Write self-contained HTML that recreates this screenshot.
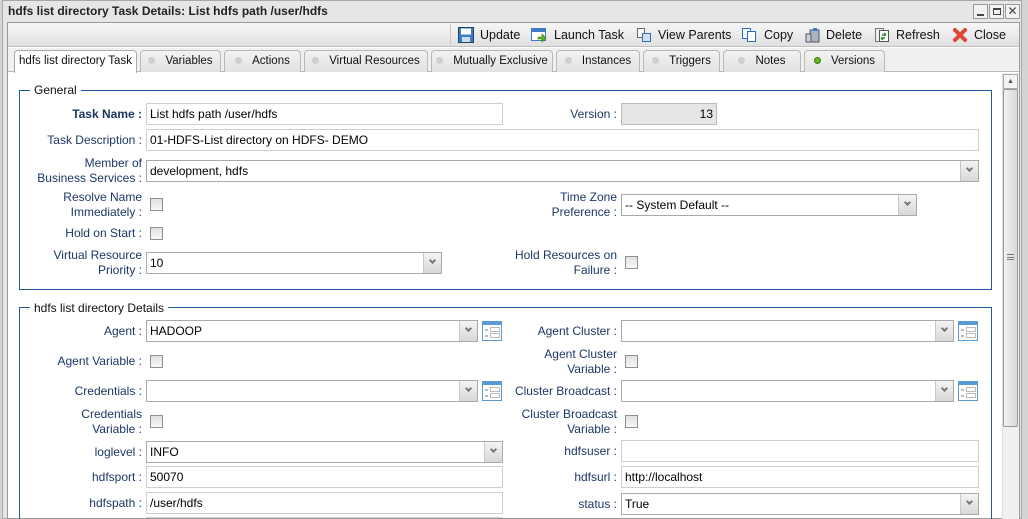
<!DOCTYPE html>
<html><head><meta charset="utf-8"><style>
*{box-sizing:border-box;margin:0;padding:0}
html,body{width:1028px;height:519px;overflow:hidden}
body{background:#d4d4d4;font-family:"Liberation Sans",sans-serif;font-size:12px;position:relative}
.a{position:absolute}
.l{position:absolute;text-align:right;color:#1c3764;line-height:15px;white-space:nowrap}
.i{position:absolute;height:22px;border:1px solid #cfcfcf;background:#fff;padding:3px 0 0 3px;color:#000;white-space:nowrap;overflow:hidden}
.s{position:absolute;height:22px;border:1px solid #aaa;background:#fff;padding:3px 0 0 3px;color:#000}
.s:after{content:"";position:absolute;right:0;top:0;width:17px;height:20px;border-left:1px solid #c8c8c8;background:linear-gradient(#f4f4f4,#d8d8d8);z-index:1}
.s b{position:absolute;right:6px;top:5px;width:5px;height:5px;border-right:2px solid #777;border-bottom:2px solid #777;transform:rotate(45deg);z-index:2}
.c{position:absolute;width:13px;height:13px;border:1px solid #8f8f8f;background:linear-gradient(#e0e0e0,#f8f8f8)}
.fs{position:absolute;border:1px solid #1f5a9e}
.lg{position:absolute;background:#fff;padding:0 4px;color:#111;font-size:12px;line-height:14px}
.tab{position:absolute;top:50px;height:22px;border:1px solid #b8b8b8;border-bottom:none;border-radius:4px 4px 0 0;background:linear-gradient(#f2f2f2,#e2e2e2);font-size:11.5px;color:#111;text-align:center;line-height:20px}
.dot{display:inline-block;width:7px;height:7px;border-radius:50%;background:#cfcfcf;margin-right:10px;vertical-align:0}
.tb{position:absolute;top:27px;color:#111;font-size:12.5px;line-height:16px}
.ic{position:absolute;width:16px;height:16px}
.bi{position:absolute;width:20px;height:20px;border:1px solid #5a9ad6;background:#fff;overflow:hidden}
.bi:before{content:"";position:absolute;left:0;right:0;top:0;height:3px;background:#5a9ad6}
.bi i{position:absolute;left:7px;width:10px;height:5px;border:1px solid #bbb}
.bi u{position:absolute;left:2px;width:3px;height:2px;background:#bbb}
</style></head><body>
<div class="a" style="left:2px;top:0;width:1020px;height:519px;background:#e6e6e6;border:1px solid #a8a8a8"></div>
<div class="a" style="left:8px;top:4px;font-weight:bold;color:#222;font-size:12px">hdfs list directory Task Details: List hdfs path /user/hdfs</div>
<div class="a" style="left:973px;top:4px;width:15px;height:15px;border:1px solid #999;background:#f2f2f2"><div class="a" style="left:3px;top:9px;width:7px;height:2px;background:#444"></div></div>
<div class="a" style="left:989px;top:4px;width:15px;height:15px;border:1px solid #999;background:#f2f2f2"><div class="a" style="left:3px;top:3px;width:8px;height:7px;border:1px solid #444;border-top-width:2px"></div></div>
<div class="a" style="left:1005px;top:4px;width:15px;height:15px;border:1px solid #999;background:#f2f2f2;font-size:12px;line-height:12px;text-align:center;color:#444">✕</div>
<div class="a" style="left:7px;top:22px;width:1013px;height:497px;border:1px solid #9a9a9a;background:#fff"></div>
<div class="a" style="left:8px;top:23px;width:1011px;height:24px;background:linear-gradient(#f6f6f6,#e0e0e0);border-bottom:1px solid #c0c0c0"></div>
<div class="a" style="left:8px;top:48px;width:1011px;height:24px;background:#f0f0f0;border-bottom:1px solid #b8b8b8"></div>
<div class="a" style="left:450px;top:24px;width:565px;height:23px;border-left:1px solid #c8c8c8"></div>
<svg class="ic" style="left:458px;top:27px" viewBox="0 0 16 16"><rect x=".5" y=".5" width="15" height="15" fill="#3d7cc9" stroke="#245"/><rect x="3" y="1.5" width="10" height="6" fill="#fff"/><rect x="4" y="10" width="8" height="5" fill="#cde"/></svg>
<div class="tb" style="left:480px">Update</div>
<svg class="ic" style="left:531px;top:27px" viewBox="0 0 16 16"><rect x=".5" y="1.5" width="14" height="12" fill="#fff" stroke="#3a7cc8"/><rect x="1" y="2" width="13" height="3" fill="#3a7cc8"/><path d="M7 10h4V7l4 4-4 4v-3H7z" fill="#5bb51e" stroke="#3a7a10" stroke-width=".6"/></svg>
<div class="tb" style="left:554px">Launch Task</div>
<svg class="ic" style="left:636px;top:27px" viewBox="0 0 16 16"><rect x="1.5" y="1.5" width="7" height="9" fill="#fff" stroke="#666"/><rect x="6.5" y="6.5" width="8" height="8" fill="#cfe0f4" stroke="#3a6ea8"/></svg>
<div class="tb" style="left:658px">View Parents</div>
<svg class="ic" style="left:741px;top:27px" viewBox="0 0 16 16"><rect x="1.5" y="1.5" width="8" height="10" fill="#fff" stroke="#2a6cc0"/><rect x="6.5" y="4.5" width="8" height="10" fill="#fff" stroke="#2a6cc0"/></svg>
<div class="tb" style="left:764px">Copy</div>
<svg class="ic" style="left:805px;top:27px" viewBox="0 0 16 16"><rect x="5" y="3" width="9" height="12" fill="#a8b4c0" stroke="#556"/><rect x="1" y="7" width="5" height="8" fill="#c8d0d8" stroke="#556"/><rect x="8" y="1" width="4" height="3" fill="#3a7cc8"/></svg>
<div class="tb" style="left:826px">Delete</div>
<svg class="ic" style="left:874px;top:27px" viewBox="0 0 16 16"><rect x="1.5" y="1.5" width="8" height="13" fill="#eee" stroke="#777"/><rect x="5.5" y="3.5" width="9" height="11" fill="#fff" stroke="#555"/><path d="M8 8h4M12 8l-2-2M11 11H7M7 11l2 2" stroke="#2a8a2a" stroke-width="1.5" fill="none"/></svg>
<div class="tb" style="left:896px">Refresh</div>
<svg class="ic" style="left:952px;top:27px" viewBox="0 0 16 16"><path d="M3 3l10 10M13 3L3 13" stroke="#e0443a" stroke-width="4" stroke-linecap="round"/></svg>
<div class="tb" style="left:974px">Close</div>
<div class="tab" style="left:14px;width:123px;background:#fff;height:23px;border-color:#aaa">hdfs list directory Task</div>
<div class="tab" style="left:140px;width:81px"><span class="dot"></span>Variables</div>
<div class="tab" style="left:224px;width:77px"><span class="dot"></span>Actions</div>
<div class="tab" style="left:304px;width:124px"><span class="dot"></span>Virtual Resources</div>
<div class="tab" style="left:431px;width:122px"><span class="dot"></span>Mutually Exclusive</div>
<div class="tab" style="left:556px;width:84px"><span class="dot"></span>Instances</div>
<div class="tab" style="left:643px;width:77px"><span class="dot"></span>Triggers</div>
<div class="tab" style="left:723px;width:78px"><span class="dot"></span>Notes</div>
<div class="tab" style="left:804px;width:81px"><span class="dot" style="background:#6ab51e;border:1px solid #3d7a10"></span>Versions</div>
<div class="a" style="left:1002px;top:73px;width:17px;height:446px;background:#f0f0f0;border-left:1px solid #ddd"></div>
<div class="a" style="left:1003px;top:74px;width:15px;height:15px;border:1px solid #aaa;background:#f4f4f4;font-size:7px;text-align:center;line-height:13px;color:#555">▲</div>
<div class="a" style="left:1003px;top:89px;width:15px;height:338px;border:1px solid #999;border-radius:2px;background:linear-gradient(90deg,#f2f2f2,#d8d8d8)"></div>
<div class="a" style="left:1007px;top:254px;width:7px;height:6px;border-top:1px solid #777;border-bottom:1px solid #777"><div style="margin-top:2px;border-top:1px solid #777"></div></div>
<div class="fs" style="left:19px;top:90px;width:973px;height:200px"></div>
<div class="lg" style="left:30px;top:83px">General</div>
<div class="l" style="left:0;width:142px;top:107px;font-weight:bold">Task Name :</div>
<div class="i" style="left:146px;top:103px;width:357px">List hdfs path /user/hdfs</div>
<div class="l" style="left:400px;width:217px;top:107px">Version :</div>
<div class="i" style="left:621px;top:103px;width:96px;background:#e6e6e6;border-color:#bbb;text-align:right;padding-right:3px">13</div>
<div class="l" style="left:0;width:142px;top:133px">Task Description :</div>
<div class="i" style="left:146px;top:129px;width:833px">01-HDFS-List directory on HDFS- DEMO</div>
<div class="l" style="left:0;width:142px;top:156px">Member of<br>Business Services :</div>
<div class="s" style="left:146px;top:160px;width:833px">development, hdfs<b></b></div>
<div class="l" style="left:0;width:142px;top:190px">Resolve Name<br>Immediately :</div>
<div class="c" style="left:150px;top:198px"></div>
<div class="l" style="left:400px;width:217px;top:190px">Time Zone<br>Preference :</div>
<div class="s" style="left:621px;top:194px;width:296px">-- System Default --<b></b></div>
<div class="l" style="left:0;width:142px;top:226px">Hold on Start :</div>
<div class="c" style="left:150px;top:227px"></div>
<div class="l" style="left:0;width:142px;top:248px">Virtual Resource<br>Priority :</div>
<div class="s" style="left:146px;top:252px;width:296px">10<b></b></div>
<div class="l" style="left:400px;width:217px;top:248px">Hold Resources on<br>Failure :</div>
<div class="c" style="left:625px;top:256px"></div>
<div class="fs" style="left:19px;top:307px;width:973px;height:212px;border-bottom:none"></div>
<div class="lg" style="left:30px;top:301px">hdfs list directory Details</div>
<div class="l" style="left:0;width:142px;top:324px">Agent :</div>
<div class="s" style="left:146px;top:320px;width:332px">HADOOP<b></b></div>
<div class="bi" style="left:482px;top:321px"><u style="top:7px"></u><i style="top:5px"></i><u style="top:13px"></u><i style="top:11px"></i></div>
<div class="l" style="left:400px;width:217px;top:324px">Agent Cluster :</div>
<div class="s" style="left:621px;top:320px;width:333px"><b></b></div>
<div class="bi" style="left:958px;top:321px"><u style="top:7px"></u><i style="top:5px"></i><u style="top:13px"></u><i style="top:11px"></i></div>
<div class="l" style="left:0;width:142px;top:354px">Agent Variable :</div>
<div class="c" style="left:150px;top:355px"></div>
<div class="l" style="left:400px;width:217px;top:347px">Agent Cluster<br>Variable :</div>
<div class="c" style="left:625px;top:355px"></div>
<div class="l" style="left:0;width:142px;top:384px">Credentials :</div>
<div class="s" style="left:146px;top:380px;width:332px"><b></b></div>
<div class="bi" style="left:482px;top:381px"><u style="top:7px"></u><i style="top:5px"></i><u style="top:13px"></u><i style="top:11px"></i></div>
<div class="l" style="left:400px;width:217px;top:384px">Cluster Broadcast :</div>
<div class="s" style="left:621px;top:380px;width:333px"><b></b></div>
<div class="bi" style="left:958px;top:381px"><u style="top:7px"></u><i style="top:5px"></i><u style="top:13px"></u><i style="top:11px"></i></div>
<div class="l" style="left:0;width:142px;top:407px">Credentials<br>Variable :</div>
<div class="c" style="left:150px;top:415px"></div>
<div class="l" style="left:400px;width:217px;top:407px">Cluster Broadcast<br>Variable :</div>
<div class="c" style="left:625px;top:415px"></div>
<div class="l" style="left:0;width:142px;top:445px">loglevel :</div>
<div class="s" style="left:146px;top:441px;width:357px">INFO<b></b></div>
<div class="l" style="left:400px;width:217px;top:444px">hdfsuser :</div>
<div class="i" style="left:621px;top:440px;width:358px"></div>
<div class="l" style="left:0;width:142px;top:470px">hdfsport :</div>
<div class="i" style="left:146px;top:466px;width:357px">50070</div>
<div class="l" style="left:400px;width:217px;top:470px">hdfsurl :</div>
<div class="i" style="left:621px;top:466px;width:358px">http://localhost</div>
<div class="l" style="left:0;width:142px;top:496px">hdfspath :</div>
<div class="i" style="left:146px;top:492px;width:357px">/user/hdfs</div>
<div class="l" style="left:400px;width:217px;top:497px">status :</div>
<div class="s" style="left:621px;top:493px;width:358px">True<b></b></div>
<div class="a" style="left:146px;top:517px;width:357px;height:2px;border-top:1px solid #cfcfcf"></div>
</body></html>
